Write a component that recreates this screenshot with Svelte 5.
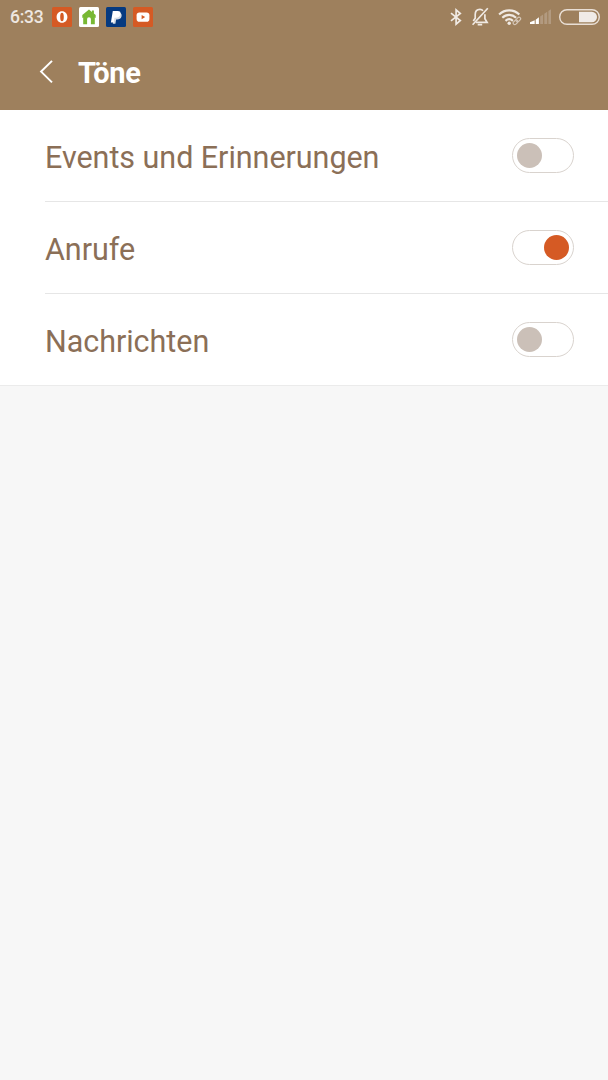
<script>
    let sounds = $state([
        {label: 'Events und Erinnerungen', on: false},
        {label: 'Anrufe', on: true},
        {label: 'Nachrichten', on: false}
    ])

    const toggle = (idx) =>{
        sounds[idx].on = !sounds[idx].on
    }
</script>

<div class="screen">
    <header>
        <div class="statusbar">
            <span class="time">6:33</span>
            <div class="apps">
                <svg width="20" height="20" viewBox="0 0 20 20">
                    <rect width="20" height="20" rx="1.5" fill="#d55a24"/>
                    <path fill="#fff" fill-rule="evenodd" d="M10 4.200c3.200 0 5.400 2.500 5.400 5.800s-2.200 5.800-5.400 5.800S4.600 13.300 4.600 10 6.800 4.200 10 4.200zM10 5.700C8.700 5.700 8.200 7.200 8.200 10s.5 4.300 1.800 4.300 1.800-1.500 1.800-4.300-.5-4.300-1.800-4.300z"/>
                </svg>
                <svg width="20" height="20" viewBox="0 0 20 20">
                    <rect width="20" height="20" rx="1.5" fill="#fff"/>
                    <path fill="#78b833" d="M10 2.500 3.300 8v3l.9-.6v6.800h3.900v-5.100a1.900 1.900 0 0 1 3.800 0v5.100h3.900v-6.800l.9.600V8l-1.800-1.500V3.500h-2v1.400z"/>
                </svg>
                <svg width="20" height="20" viewBox="0 0 20 20">
                    <rect width="20" height="20" rx="1.5" fill="#063a80"/>
                    <path fill="#d6dde6" d="M8.500 5.700h5.500c1.500.7 1.900 2 1.500 3.700-.6 2.200-2.100 3-4.400 3h-1l-.7 4.300H6.800z"/>
                    <path fill="#fff" d="M6.800 3.900h4.800c2.400 0 3.400 1.200 2.900 3.300-.5 2.500-2.100 3.500-4.600 3.500H8.500l-.7 4.700H4.900z"/>
                </svg>
                <svg width="20" height="20" viewBox="0 0 20 20">
                    <rect width="20" height="20" rx="1.5" fill="#d55a24"/>
                    <rect x="3.600" y="5.500" width="12.800" height="9.200" rx="2.800" fill="#fff"/>
                    <path fill="#d55a24" d="M8.600 8v4.200l3.600-2.100z"/>
                </svg>
            </div>
            <div class="system">
                <svg class="bluetooth" width="12" height="18" viewBox="0 0 12 18" fill="none" stroke="#f0e9e3" stroke-width="1.700">
                    <path d="M1 5.200 10.300 12.500 6.100 16.100V1.900l4.200 3.600L1 12.800"/>
                </svg>
                <svg class="bell" width="18" height="20" viewBox="0 0 18 20" fill="none" stroke="#f0e9e3" stroke-width="1.700">
                    <path d="M12 3.700C11.200 2.800 10.200 2.400 9 2.400c-3 0-4.800 2.200-4.800 5.200v3.600L2.300 14M13.900 7.300v4.400l2.200 3.600H5"/>
                    <path d="M6.700 17.700h4.500M16.800 1.200 1.600 17.800"/>
                </svg>
                <svg class="wifi" width="24" height="18" viewBox="0 0 24 18" fill="none" stroke="#f0e9e3" stroke-width="2.100">
                    <path d="M1.100 6.500c5.600-5.500 14.600-5.500 20.200 0M4.300 9.800c4-3.900 9.800-3.900 13.800 0M7.500 12.900c2.300-2.100 5.100-2.100 7.400 0"/>
                    <circle cx="11.200" cy="15.200" r="1.700" fill="#f0e9e3" stroke="none"/>
                    <g stroke="#9e805d" stroke-width="4"><path d="M16.300 15.500l5-5"/></g>
                    <g stroke="#d5c6b7" stroke-width="1.200">
                        <rect x="-2.600" y="-1.600" width="5.200" height="3.200" rx="1.600" transform="translate(17.500 14.300) rotate(-45)"/>
                        <rect x="-2.600" y="-1.600" width="5.200" height="3.200" rx="1.600" transform="translate(20.300 11.500) rotate(-45)"/>
                    </g>
                </svg>
                <svg class="signal" width="22" height="16" viewBox="0 0 22 16">
                    <path fill="#fff" d="M0 13.200l4.700-2V15H0zM5.700 10.800l3.200-2.600V15H5.700z"/>
                    <path fill="#b29a80" d="M10.200 7.600l2.900-2V15h-2.900zM14.300 4.700l2.900-2V15h-2.900zM18.400 2l2.600-1.700V15h-2.600z"/>
                </svg>
                <svg class="battery" width="41" height="16" viewBox="0 0 41 16">
                    <rect x=".7" y=".7" width="39.600" height="14.600" rx="7.300" fill="none" stroke="#e9dfd6" stroke-width="1.400"/>
                    <path fill="#f0ebe7" d="M20 2.800h12.800a5.200 5.200 0 0 1 0 10.400H20z"/>
                </svg>
            </div>
        </div>
        <div class="titlebar">
            <svg width="14" height="24" viewBox="0 0 14 24" fill="none" stroke="#fff" stroke-width="2">
                <path d="M13 .9 2.100 11.600 13 22.400"/>
            </svg>
            <h1>Töne</h1>
        </div>
    </header>

    <div class="list">
        {#each sounds as sound, i}
            <div class="row">
                <span class="label">{sound.label}</span>
                <button class={sound.on ? 'switch on' : 'switch'} aria-label={sound.label} onclick={()=>toggle(i)}>
                    <span class="knob"></span>
                </button>
            </div>
        {/each}
    </div>
</div>

<style>
    :global(body){
        background: #f7f7f7;
    }
    .screen{
        width: 100%;
        min-height: 100vh;
        background: #f7f7f7;
        font-family: Roboto, "Liberation Sans", sans-serif;
    }
    header{
        height: 109.500px;
        background: #9e805d;
    }
    .statusbar{
        display: flex;
        align-items: center;
        height: 34px;
        padding: 0 8px 0 10px;
    }
    .time{
        width: 42px;
        color: #eee7e1;
        font-size: 17.500px;
        font-weight: 500;
        letter-spacing: -.25px;
    }
    .apps{
        display: flex;
        gap: 7px;
    }
    .system{
        display: flex;
        align-items: center;
        margin-left: auto;
    }
    .bell{
        margin-left: 9px;
    }
    .wifi{
        margin-left: 9px;
    }
    .signal{
        margin-left: 8px;
    }
    .battery{
        margin-left: 7px;
    }
    svg{
        display: block;
        flex: none;
    }
    .titlebar{
        display: flex;
        align-items: center;
        height: 76px;
        padding-left: 39px;
    }
    h1{
        margin: 0 0 0 25px;
        padding-top: 2px;
        color: #fff;
        font-size: 29px;
        font-weight: 700;
        letter-spacing: -.3px;
        line-height: 36px;
    }
    .list{
        background: #fff;
        border-bottom: 1px solid #ebebeb;
    }
    .row{
        display: flex;
        align-items: center;
        justify-content: space-between;
        box-sizing: border-box;
        height: 92px;
        margin-left: 45px;
        padding-right: 34px;
        border-bottom: 1px solid #e6e6e6;
        color: #8b6f57;
        font-size: 30.500px;
        letter-spacing: -.04px;
    }
    .row:last-child{
        height: 91px;
        border-bottom: none;
    }
    .label{
        padding-top: 4px;
    }
    .switch{
        display: flex;
        align-items: center;
        box-sizing: border-box;
        width: 62px;
        height: 35px;
        padding: 0 4px;
        background: #fff;
        border: 1px solid #d9d3ce;
        border-radius: 18px;
        cursor: pointer;
    }
    .knob{
        width: 25px;
        height: 25px;
        border-radius: 50%;
        background: #cbc0b8;
    }
    .on{
        justify-content: flex-end;
    }
    .on .knob{
        background: #d55a24;
    }
</style>
